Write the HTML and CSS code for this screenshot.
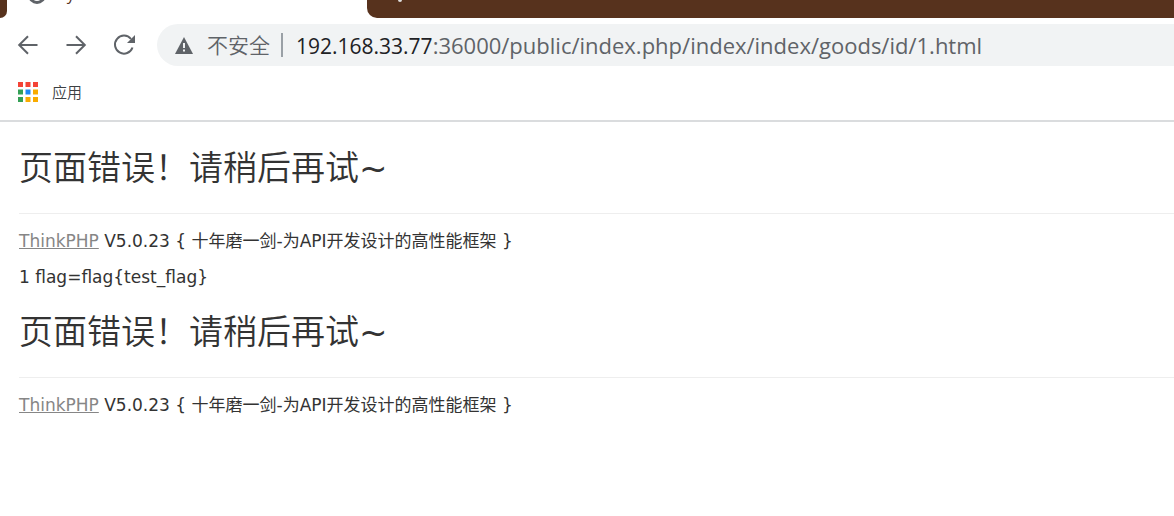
FILE: index.html
```html
<!DOCTYPE html>
<html lang="zh-CN">
<head>
<meta charset="utf-8">
<title>System Error</title>
<link rel="stylesheet" href="styles.css">
</head>
<body>
<header class="browser">
  <div class="tabs">
    <div class="tab-prev"></div>
    <div class="tab-active">
      <svg class="tab-icon" width="18" height="18" viewBox="0 0 18 18" aria-hidden="true"><circle cx="9" cy="9" r="7.5" fill="none" stroke="#5f6368" stroke-width="3"/></svg>
      <span class="tab-title">Sy</span>
    </div>
    <div class="tab-rest"><span class="tab-mark"></span></div>
  </div>
  <nav class="toolbar">
    <button class="tool" aria-label="后退"><svg width="20" height="20" viewBox="0 0 20 20"><path d="M19.5 10H1.5M10 1.2 1.2 10l8.8 8.8"/></svg></button>
    <button class="tool" aria-label="前进"><svg width="20" height="20" viewBox="0 0 20 20"><path d="M.5 10h18M10 1.2 18.8 10 10 18.8"/></svg></button>
    <button class="tool" aria-label="刷新"><svg width="22" height="20" viewBox="0 0 22 20"><path d="M18.5 12.5A9 9 0 1 1 17 4"/><path class="solid" d="M21 0v8h-8z"/></svg></button>
    <div class="address">
      <svg class="warning" width="18" height="17" viewBox="0 0 18 17" aria-hidden="true"><path fill="#5f6368" d="M9 0 18 17H0z"/><path stroke="#f1f3f4" stroke-width="2" d="M9 6v5M9 12.5v2"/></svg>
      <span class="security">不安全</span>
      <span class="separator"></span>
      <span class="url"><span class="host">192.168.33.77</span><span class="path">:36000/public/index.php/index/index/goods/id/1.html</span></span>
    </div>
  </nav>
  <div class="bookmarks">
    <a class="apps" href="#">
      <svg width="20" height="20" viewBox="0 0 20 20" aria-hidden="true"><path fill="#f44336" d="M0 0h5v5H0zM7.5 0h5v5h-5zM15 0h5v5h-5z"/><path fill="#34a056" d="M0 7.5h5v5H0zM0 15h5v5H0z"/><path fill="#1e88f5" d="M7.5 7.5h5v5h-5z"/><path fill="#f9ab00" d="M15 7.5h5v5h-5zM7.5 15h5v5h-5zM15 15h5v5h-5z"/></svg>
      <span>应用</span>
    </a>
  </div>
</header>
<main class="page">
  <section class="error">
    <h1>页面错误！请稍后再试<span class="tilde">~</span></h1>
    <p class="copyright"><a href="#">ThinkPHP</a> V5.0.23 { 十年磨一剑-为API开发设计的高性能框架 }</p>
  </section>
  <p class="output">1 flag=flag{test_flag}</p>
  <section class="error">
    <h1>页面错误！请稍后再试<span class="tilde">~</span></h1>
    <p class="copyright"><a href="#">ThinkPHP</a> V5.0.23 { 十年磨一剑-为API开发设计的高性能框架 }</p>
  </section>
</main>
</body>
</html>
```
FILE: styles.css
```css
* { box-sizing: border-box; }
body { margin: 0; background: #fff; color: #333; font-family: "DejaVu Sans", "Noto Sans CJK SC", sans-serif; }
h1, p { margin: 0; font-weight: 400; }

.browser { border-bottom: 2px solid #dadcde; }
.tabs { display: flex; height: 18px; overflow: hidden; }
.tab-prev { width: 7px; background: #57321d; border-bottom-right-radius: 8px; }
.tab-active { display: flex; align-items: flex-end; gap: 12px; width: 360px; padding: 0 21px 14px; }
.tab-icon { flex: none; }
.tab-title { font: 16px/20px "Open Sans", sans-serif; color: #57321d; }
.tab-rest { flex: 1; padding-left: 31px; background: #57321d; border-bottom-left-radius: 10px; }
.tab-mark { display: block; width: 4px; height: 2px; background: #ddd; border-radius: 0 0 2px 2px; }

.toolbar { display: flex; align-items: center; gap: 26px; padding: 6px 0 0 18px; }
.tool { display: flex; width: 22px; padding: 0; border: 0; background: none; }
.tool svg { fill: none; stroke: #5f6368; stroke-width: 2; overflow: visible; }
.tool .solid { fill: #5f6368; stroke: none; }
.address { flex: 1; display: flex; align-items: center; height: 42px; margin-left: -5px; padding-left: 18px; background: #f1f3f4; border-radius: 21px 0 0 21px; color: #5f6368; white-space: nowrap; font: 21px/30px "Open Sans", "Noto Sans CJK SC", sans-serif; }
.security { margin-left: 14px; font-weight: 350; }
.separator { width: 2px; height: 24px; margin: 0 13px 0 11px; background: #9aa0a6; }
.host { color: #202124; }
.path { font-size: 22px; }

.bookmarks { display: flex; align-items: center; height: 54px; padding: 0 0 2px 18px; }
.apps { display: flex; align-items: center; gap: 14px; color: #3c4043; text-decoration: none; font: 350 15px/20px "Noto Sans CJK SC", sans-serif; }

.page { padding: 19px 0 0 19px; }
.error h1 { padding-bottom: 22px; border-bottom: 1px solid #eee; font: 350 34px/50px "Noto Sans CJK SC", sans-serif; }
.tilde { font-family: "DejaVu Sans", sans-serif; font-weight: 400; line-height: 1; }
.copyright { padding: 12px 0; font-size: 17px; line-height: 30px; }
.copyright a { color: #868686; }
.output { margin: -6px 0 13px; font-size: 17px; line-height: 30px; }
```
